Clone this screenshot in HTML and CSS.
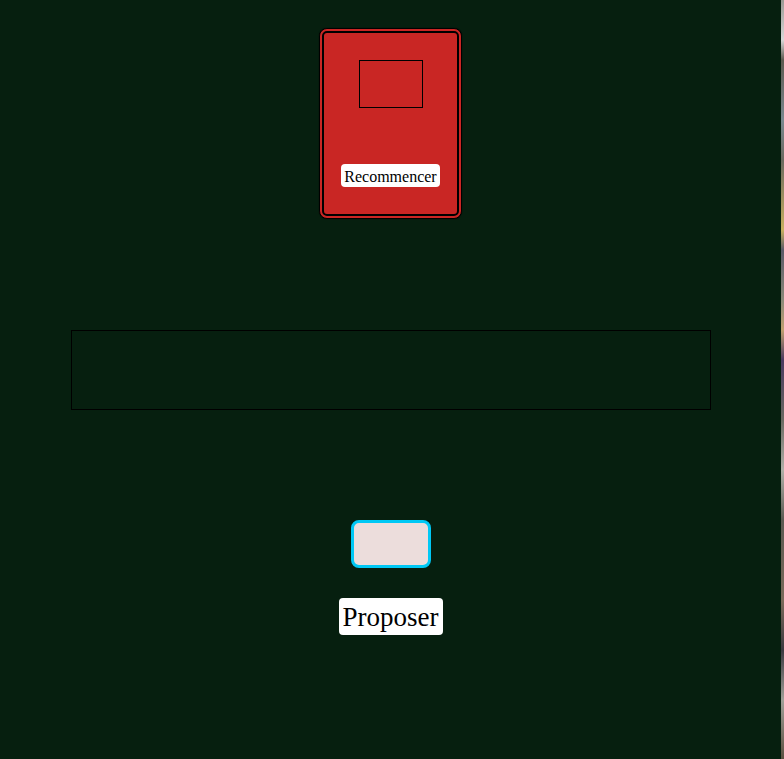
FILE: index.html
```html
<!DOCTYPE html>
<html lang="fr">
<head>
<meta charset="utf-8">
<title>Jeu</title>
<link rel="stylesheet" href="styles.css">
</head>
<body>
<div class="page">
  <main class="main">
    <div class="card">
      <div class="card-inner">
        <div class="picture"></div>
        <button class="restart">Recommencer</button>
      </div>
    </div>
    <div class="board"></div>
    <input class="answer" type="text">
    <button class="propose">Proposer</button>
  </main>
  <div class="strip"></div>
</div>
</body>
</html>
```
FILE: styles.css
```css
html, body {
  margin: 0;
  padding: 0;
  background: #061f0f;
  height: 100%;
}
.page {
  display: flex;
  height: 759px;
  font-family: "Liberation Serif", "Times New Roman", serif;
}
.main {
  flex: 1;
  display: flex;
  flex-direction: column;
  align-items: center;
  padding-top: 28px;
}
.strip {
  width: 3px;
  background: linear-gradient(to bottom,
    #9a9a94 0, #d8d8d8 40px, #5c5a50 60px, #7a8a90 120px, #6a6a60 160px,
    #c8b060 230px, #5a5a68 250px, #8a8a7a 300px, #c0a070 330px, #4a3a60 360px,
    #6a6a62 420px, #b0b0a8 470px, #5a5a52 520px, #7a6a5a 600px, #3a3a40 650px,
    #a0a098 700px, #5a5040 759px);
}
.card {
  width: 143px;
  height: 191px;
  box-sizing: border-box;
  border: 1px solid #000;
  box-shadow: 0 0 1px #000;
  border-radius: 8px;
  background: #c92624;
  padding: 2px;
}
.card-inner {
  height: 100%;
  box-sizing: border-box;
  border: 2px solid #000;
  border-radius: 5px;
  display: flex;
  flex-direction: column;
  align-items: center;
  justify-content: space-between;
  padding: 27px 0 27px;
}
.picture {
  width: 64px;
  height: 48px;
  box-sizing: border-box;
  border: 1px solid #000;
}
.restart {
  font-family: "Liberation Serif", "Times New Roman", serif;
  font-size: 16px;
  background: #fff;
  color: #000;
  border: none;
  border-radius: 4px;
  padding: 2px 3px;
  height: 23px;
  width: 99px;
  line-height: 21px;
}
.board {
  margin-top: 111px;
  width: 640px;
  height: 80px;
  box-sizing: border-box;
  border: 1px solid #000;
}
.answer {
  margin-top: 110px;
  width: 80px;
  height: 48px;
  box-sizing: border-box;
  border: 3px solid #00c8f5;
  border-radius: 8px;
  background: #ecdddc;
  padding: 0;
  outline: none;
}
.propose {
  margin-top: 30px;
  font-family: "Liberation Serif", "Times New Roman", serif;
  font-size: 27px;
  background: #fff;
  color: #000;
  border: none;
  border-radius: 4px;
  padding: 3px 4px;
  width: 104px;
  height: 37px;
  line-height: 33px;
}
```
